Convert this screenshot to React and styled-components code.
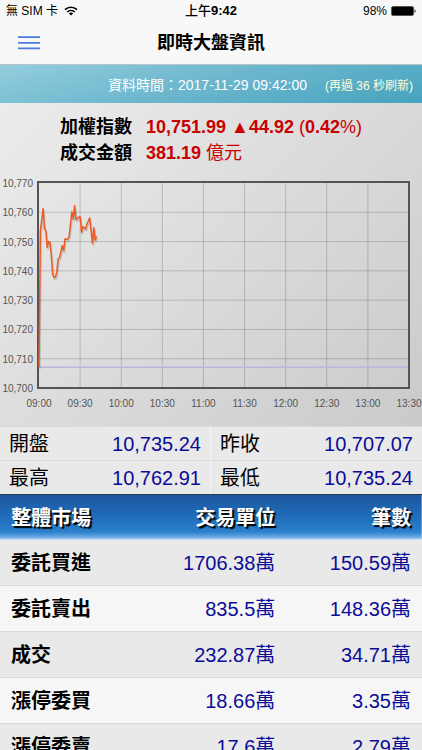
import React from 'react';
import styled, { createGlobalStyle } from 'styled-components';

// [minutes after 09:00, index]
const points = [
    [0, 10707.1], [1, 10753.7], [3, 10761.3], [4, 10754.4], [5, 10753.7],
    [6, 10748], [7, 10750], [8, 10749.7], [9, 10745.2], [10, 10738.8],
    [11, 10737.7], [12, 10737.9], [13, 10739.6], [14, 10744.2], [15, 10744.5],
    [17, 10748.6], [18, 10746.9], [19, 10750.9], [21, 10750.8], [22, 10751.8],
    [24, 10760.2], [25, 10757.7], [26, 10762.3], [27, 10757.5], [30, 10758.6],
    [31, 10753.2], [32, 10755.1], [34, 10754.3], [35, 10756], [37, 10758.1],
    [38, 10753.7], [39, 10749.4], [40, 10754.7], [41, 10750.5], [42, 10751.8],
];

const prevClose = 10707.07;

const quotes = [
    { name: '開盤', value: '10,735.24' },
    { name: '昨收', value: '10,707.07' },
    { name: '最高', value: '10,762.91' },
    { name: '最低', value: '10,735.24' },
];

const rows = [
    { name: '委託買進', unit: '1706.38萬', count: '150.59萬' },
    { name: '委託賣出', unit: '835.5萬', count: '148.36萬' },
    { name: '成交', unit: '232.87萬', count: '34.71萬' },
    { name: '漲停委買', unit: '18.66萬', count: '3.35萬' },
    { name: '漲停委賣', unit: '17.6萬', count: '2.79萬' },
];

const Chart = () => {
    const left = 39;
    const right = 409;
    const top = 7;
    const bottom = 212;

    const toX = (minute) => left + (minute / 270) * (right - left);
    const toY = (value) => top + ((10770 - value) / 70) * (bottom - top);

    const times = ['09:00', '09:30', '10:00', '10:30', '11:00', '11:30', '12:00', '12:30', '13:00', '13:30'];
    const levels = [10770, 10760, 10750, 10740, 10730, 10720, 10710, 10700];
    const line = points.map(([minute, value]) => `${toX(minute)},${toY(value)}`).join(' ');

    return (
        <ChartSvg viewBox="0 0 422 250" role="img" aria-label="加權指數走勢圖">
            {times.slice(1, -1).map((time, idx) => (
                <GridLine key={time} x1={toX((idx + 1) * 30)} x2={toX((idx + 1) * 30)} y1={top} y2={bottom} />
            ))}
            {levels.slice(1, -1).map((level) => (
                <GridLine key={level} x1={left} x2={right} y1={toY(level)} y2={toY(level)} />
            ))}
            <BaseLine x1={left} x2={right} y1={toY(prevClose)} y2={toY(prevClose)} />
            <Frame x={left - 1} y={top - 1} width={right - left + 1} height={bottom - top + 1} />
            <PriceShadow points={line} transform="translate(1 2)" />
            <PriceLine points={line} />
            {levels.map((level) => (
                <AxisText key={level} x={33} y={toY(level) + 4} textAnchor="end">{level.toLocaleString('en-US')}</AxisText>
            ))}
            {times.map((time, idx) => (
                <AxisText key={time} x={toX(idx * 30)} y={231} textAnchor="middle">{time}</AxisText>
            ))}
        </ChartSvg>
    );
};

const App = () => {
    return (
        <Page>
            <GlobalStyle />
            <StatusBar>
                <Carrier>
                    無 SIM 卡
                    <svg width="14" height="10" viewBox="0 0 14 10" fill="none" stroke="#000" strokeWidth="1.7">
                        <path d="M1 3.7a8.6 8.6 0 0 1 12 0" />
                        <path d="M3.2 6a5.5 5.5 0 0 1 7.6 0" />
                        <path d="M7 9.6 4.9 7.5a3 3 0 0 1 4.2 0z" fill="#000" stroke="none" />
                    </svg>
                </Carrier>
                <Clock>上午<b>9:42</b></Clock>
                <Battery>
                    98%
                    <svg width="25" height="10" viewBox="0 0 25 10">
                        <rect x="0.5" y="0.5" width="22" height="9" rx="1.5" fill="#000" stroke="#555" />
                        <path d="M23.5 3.2c1.4.4 1.4 3.2 0 3.6z" fill="#000" />
                    </svg>
                </Battery>
            </StatusBar>
            <NavBar>
                <MenuButton type="button" aria-label="選單">
                    <svg width="22" height="14" viewBox="0 0 22 14" stroke="#4b7bdc" strokeWidth="1.8">
                        <path d="M0 1.2h22M0 6.8h22M0 12.4h22" />
                    </svg>
                </MenuButton>
                <Title>即時大盤資訊</Title>
            </NavBar>
            <TimeBar>
                <span>資料時間：2017-11-29 09:42:00</span>
                <Countdown>(再過 36 秒刷新)</Countdown>
            </TimeBar>
            <Content>
                <Overview>
                    <Summary>
                        <dt>加權指數</dt>
                        <dd><b>10,751.99 ▲44.92</b> (<b>0.42</b>%)</dd>
                        <dt>成交金額</dt>
                        <dd><b>381.19</b> 億元</dd>
                    </Summary>
                    <Chart />
                </Overview>
                <QuoteGrid>
                    {quotes.map((quote) => (
                        <Quote key={quote.name}>
                            <dt>{quote.name}</dt>
                            <dd>{quote.value}</dd>
                        </Quote>
                    ))}
                </QuoteGrid>
                <Table>
                    <TableHead>
                        <tr>
                            <HeadCell>整體市場</HeadCell>
                            <HeadCell>交易單位</HeadCell>
                            <HeadCell>筆數</HeadCell>
                        </tr>
                    </TableHead>
                    <tbody>
                        {rows.map((row) => (
                            <TableRow key={row.name}>
                                <RowName scope="row">{row.name}</RowName>
                                <Cell>{row.unit}</Cell>
                                <Cell>{row.count}</Cell>
                            </TableRow>
                        ))}
                    </tbody>
                </Table>
            </Content>
        </Page>
    );
};

export default App;

const GlobalStyle = createGlobalStyle`
    * {
        box-sizing: border-box;
    }

    body {
        margin: 0;
        background: #f8f8f8;
        font-family: 'Liberation Sans', 'Noto Sans CJK TC', sans-serif;
        color: #000;
    }

    dl, dd, h1 {
        margin: 0;
    }
`;

const Page = styled.div`
    display: flex;
    flex-direction: column;
    height: 100vh;
`;

const StatusBar = styled.div`
    display: grid;
    grid-template-columns: 1fr auto 1fr;
    align-items: center;
    flex: none;
    height: 22px;
    padding: 0 6px;
    font-size: 12px;
    line-height: 22px;
`;

const Carrier = styled.span`
    display: flex;
    align-items: center;
    gap: 6px;
`;

const Clock = styled.span`
    font-size: 13px;
    font-weight: 500;
`;

const Battery = styled.span`
    display: flex;
    align-items: center;
    justify-content: flex-end;
    gap: 4px;
`;

const NavBar = styled.header`
    display: grid;
    grid-template-columns: 1fr auto 1fr;
    align-items: center;
    flex: none;
    height: 43px;
    border-bottom: 1px solid #b9c4c8;
`;

const MenuButton = styled.button`
    display: flex;
    justify-self: start;
    padding: 8px 18px;
    border: 0;
    background: none;
`;

const Title = styled.h1`
    font-size: 18px;
    line-height: 24px;
`;

const TimeBar = styled.div`
    display: flex;
    align-items: center;
    justify-content: flex-end;
    gap: 18px;
    flex: none;
    height: 38px;
    padding: 0 9px;
    background: linear-gradient(165deg, #93cddd, #6bb6cd 50%, #46a3bf);
    color: #fff;
    font-size: 14px;
`;

const Countdown = styled.span`
    color: #ffffd8;
    font-size: 12px;
`;

const Content = styled.main`
    flex: 1;
    min-height: 0;
    overflow-y: auto;
    scrollbar-width: none;
`;

const Overview = styled.section`
    padding-top: 11px;
    background: linear-gradient(135deg, #ececec, #cacaca);
`;

const Summary = styled.dl`
    display: grid;
    grid-template-columns: auto auto;
    justify-content: center;
    column-gap: 14px;
    padding-bottom: 10px;
    font-size: 18px;
    line-height: 26px;

    dt {
        font-weight: bold;
    }

    dd {
        color: #c80000;
    }
`;

const ChartSvg = styled.svg`
    display: block;
    width: 100%;
    height: auto;
`;

const GridLine = styled.line`
    stroke: rgba(0, 0, 0, 0.17);
    stroke-width: 1;
`;

const BaseLine = styled.line`
    stroke: #b9b7dd;
    stroke-width: 1.5;
`;

const Frame = styled.rect`
    fill: none;
    stroke: #545454;
    stroke-width: 2;
`;

const PriceLine = styled.polyline`
    fill: none;
    stroke: #ee5a24;
    stroke-width: 1.5;
    stroke-linejoin: round;
`;

const PriceShadow = styled(PriceLine)`
    stroke: rgba(0, 0, 0, 0.14);
`;

const AxisText = styled.text`
    fill: #545454;
    font-size: 10px;
`;

const QuoteGrid = styled.dl`
    display: grid;
    grid-template-columns: 1fr 1fr;
    border-bottom: 1px solid #2a3c55;
    background: #e9e9e9;
`;

const Quote = styled.div`
    display: flex;
    align-items: center;
    justify-content: space-between;
    height: 34px;
    padding: 0 9px;
    border-top: 1px solid #dadada;
    font-size: 20px;
    line-height: 32px;

    &:nth-child(odd) {
        border-right: 1px solid #f4f4f4;
    }

    dd {
        color: #0c0c98;
    }
`;

const Table = styled.table`
    width: 100%;
    table-layout: fixed;
    border-spacing: 0;
    font-size: 20px;
    line-height: 30px;

    th, td {
        padding: 0 6px;
        text-align: right;
    }

    th:first-child {
        padding-left: 11px;
        text-align: left;
    }

    th:last-child, td:last-child {
        padding-right: 11px;
    }

    tbody th, tbody td {
        height: 46px;
        border-bottom: 1px solid #d9d9d9;
    }
`;

const TableHead = styled.thead`
    background: linear-gradient(#1d579f, #206bb8 45%, #2b80cd 82%, #6aabe2 94%, #d5e6f5);
`;

const HeadCell = styled.th`
    height: 45px;
    color: #fff;
    text-shadow: 2px 2px 1px #000;
`;

const TableRow = styled.tr`
    background: #e9e9e9;

    &:nth-child(even) {
        background: #f6f6f6;
    }
`;

const RowName = styled.th`
    font-weight: bold;
`;

const Cell = styled.td`
    color: #0c0c98;
`;
